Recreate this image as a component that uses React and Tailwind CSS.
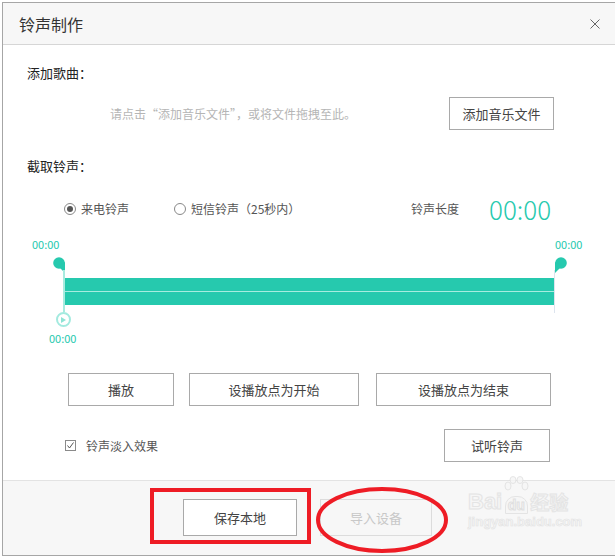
import React from "react";

const FONT = { fontFamily: '"Noto Sans CJK SC", "Liberation Sans", sans-serif' };
const TEAL = "#26c9ae";

function Btn({ className = "", disabled, children }) {
  return (
    <button
      className={
        "flex items-center justify-center text-[13px] " +
        (disabled
          ? "border border-[#dcdcdc] bg-[#f7f7f7] text-[#c8c8c8] "
          : "border border-[#a9a9a9] bg-white text-[#444] ") +
        className
      }
    >
      {children}
    </button>
  );
}

// teardrop marker above the bar; flip = tail on the left
function Pin({ flip }) {
  return (
    <svg width="13" height="17" viewBox="0 0 13 17" style={flip ? { transform: "scaleX(-1)" } : undefined}>
      <circle cx="6" cy="6" r="5.8" fill={TEAL} />
      <polygon points="5,9 12,5 12,16" fill={TEAL} />
    </svg>
  );
}

function Radio({ checked, children }) {
  return (
    <span className="flex items-center gap-[5px] text-[12px] text-[#555]">
      <span className="flex h-[12px] w-[12px] items-center justify-center rounded-full border border-[#888] bg-white">
        {checked ? <span className="h-[6px] w-[6px] rounded-full bg-[#555]" /> : null}
      </span>
      {children}
    </span>
  );
}

export default function App() {
  return (
    <div className="relative h-[560px] w-[615px] overflow-hidden bg-white" style={FONT}>
      <div className="ml-[2px] mt-[2px] flex h-[554px] w-[613px] flex-col border-b border-l border-t border-[#a6a6a6]">
        {/* header */}
        <div className="flex h-[42px] shrink-0 items-center border-b border-[#d6d6d6] bg-[#f7f7f7] pl-[16px] pr-[15px]">
          <span className="text-[16px] text-[#333]">铃声制作</span>
          <svg className="ml-auto" width="10" height="10" viewBox="0 0 10 10">
            <path d="M0.5 0.5 L9.5 9.5 M9.5 0.5 L0.5 9.5" stroke="#666" strokeWidth="1" />
          </svg>
        </div>

        {/* body */}
        <div className="h-[435px] shrink-0 pl-[24px] pt-[20px]">
          <div className="h-[16px] text-[13px] leading-[16px] text-[#222]">添加歌曲：</div>
          <div className="mt-[16px] flex h-[33px] items-center">
            <span className="ml-[83px] w-[339px] text-[12px] text-[#b5b5b5]">请点击“添加音乐文件”，或将文件拖拽至此。</span>
            <Btn className="h-[33px] w-[105px]">添加音乐文件</Btn>
          </div>

          <div className="mt-[28px] h-[16px] text-[13px] leading-[16px] text-[#222]">截取铃声：</div>
          <div className="mt-[20px] flex h-[30px] items-center">
            <div className="ml-[37px] w-[110px]">
              <Radio checked>来电铃声</Radio>
            </div>
            <div className="w-[237px]">
              <Radio>短信铃声（25秒内）</Radio>
            </div>
            <span className="w-[78px] text-[12px] text-[#555]">铃声长度</span>
            <span className="text-[26px] leading-[30px] font-light" style={{ color: TEAL }}>00:00</span>
          </div>

          {/* timeline */}
          <div className="relative -ml-[24px] h-[126px] pl-[61px] pt-[54px]">
            <span className="absolute left-[29px] top-[14px] text-[11px] leading-[12px]" style={{ color: TEAL }}>00:00</span>
            <span className="absolute left-[552px] top-[14px] text-[11px] leading-[12px]" style={{ color: TEAL }}>00:00</span>
            <div className="absolute left-[50px] top-[33px]">
              <Pin />
            </div>
            <div className="absolute left-[551px] top-[33px]">
              <Pin flip />
            </div>
            <div className="absolute left-[60px] top-[46px] h-[42px] w-[2px] bg-[#a8ebdf]" />
            <div className="absolute left-[551px] top-[46px] h-[43px] w-px bg-[#dde4ee]" />
            <div className="absolute left-[53px] top-[88px] flex h-[15px] w-[15px] items-center justify-center rounded-full border-2 border-[#a3eadf] bg-white">
              <svg width="5" height="6" viewBox="0 0 5 6">
                <polygon points="0,0 5,3 0,6" fill="#8fe3d5" />
              </svg>
            </div>
            <span className="absolute left-[46px] top-[108px] text-[11px] leading-[12px]" style={{ color: TEAL }}>00:00</span>

            <div className="flex h-[27px] w-[490px] flex-col" style={{ backgroundColor: TEAL }}>
              <div className="h-[13px]" />
              <div className="h-px bg-[#a7ece0]" />
            </div>
          </div>

          <div className="mt-[23px] flex h-[33px]">
            <Btn className="ml-[41px] w-[106px]">播放</Btn>
            <Btn className="ml-[15px] w-[170px]">设播放点为开始</Btn>
            <Btn className="ml-[17px] w-[175px]">设播放点为结束</Btn>
          </div>

          <div className="mt-[23px] flex h-[33px] items-center">
            <div className="ml-[38px] flex w-[379px] items-center gap-[10px]">
              <span className="flex h-[11px] w-[11px] items-center justify-center border border-[#8a8a8a] bg-white">
                <svg width="9" height="9" viewBox="0 0 9 9">
                  <path d="M1.5 4.5 L3.5 7 L7.5 1.5" fill="none" stroke="#555" strokeWidth="1" />
                </svg>
              </span>
              <span className="text-[12px] text-[#555]">铃声淡入效果</span>
            </div>
            <Btn className="h-[33px] w-[106px]">试听铃声</Btn>
          </div>
        </div>

        {/* footer */}
        <div className="flex h-[75px] shrink-0 border-t border-[#e3e3e3] bg-[#f7f7f7] pt-[18px]">
          <Btn className="ml-[180px] h-[37px] w-[114px]">保存本地</Btn>
          <Btn disabled className="ml-[23px] h-[37px] w-[112px]">导入设备</Btn>
        </div>
      </div>

      {/* watermark */}
      <div className="pointer-events-none absolute left-[468px] top-[490px] flex flex-col items-start opacity-80">
        <div className="flex items-end">
          <span
            className="text-[22px] font-bold leading-[24px] text-[#f6f6f6]"
            style={{ fontFamily: '"Liberation Sans", sans-serif', WebkitTextStroke: "1px #e0e0e0" }}
          >
            Bai
          </span>
          <span className="relative ml-[1px] flex h-[24px] w-[26px] items-end justify-center">
            <svg className="absolute -top-[14px] left-0" width="26" height="16" viewBox="0 0 26 16">
              <ellipse cx="5" cy="10" rx="3" ry="4" fill="#f6f6f6" stroke="#e0e0e0" />
              <ellipse cx="10" cy="4" rx="3" ry="3.5" fill="#f6f6f6" stroke="#e0e0e0" />
              <ellipse cx="17" cy="4" rx="3" ry="3.5" fill="#f6f6f6" stroke="#e0e0e0" />
              <ellipse cx="22" cy="10" rx="3" ry="4" fill="#f6f6f6" stroke="#e0e0e0" />
            </svg>
            <span
              className="rounded-t-[10px] border border-[#e0e0e0] bg-[#f6f6f6] px-[2px] text-[14px] font-bold leading-[16px] text-[#f6f6f6]"
              style={{ fontFamily: '"Liberation Sans", sans-serif', WebkitTextStroke: "1px #dadada" }}
            >
              du
            </span>
          </span>
          <span
            className="ml-[1px] text-[19px] font-bold leading-[24px] text-[#f6f6f6]"
            style={{ WebkitTextStroke: "1px #e0e0e0" }}
          >
            经验
          </span>
        </div>
        <span
          className="mt-[1px] text-[13px] font-bold leading-[14px] text-[#f4f4f4]"
          style={{ fontFamily: '"Liberation Sans", sans-serif', WebkitTextStroke: "0.6px #dedede" }}
        >
          jingyan.baidu.com
        </span>
      </div>

      {/* red annotations */}
      <div className="pointer-events-none absolute left-[150px] top-[488px] h-[56px] w-[161px] border-4 border-[#ee1c25]" />
      <svg className="pointer-events-none absolute left-[314px] top-[485px]" width="136" height="70" viewBox="0 0 136 70">
        <ellipse cx="68" cy="35" rx="64" ry="31" fill="none" stroke="#ee1c25" strokeWidth="4" />
      </svg>
    </div>
  );
}
